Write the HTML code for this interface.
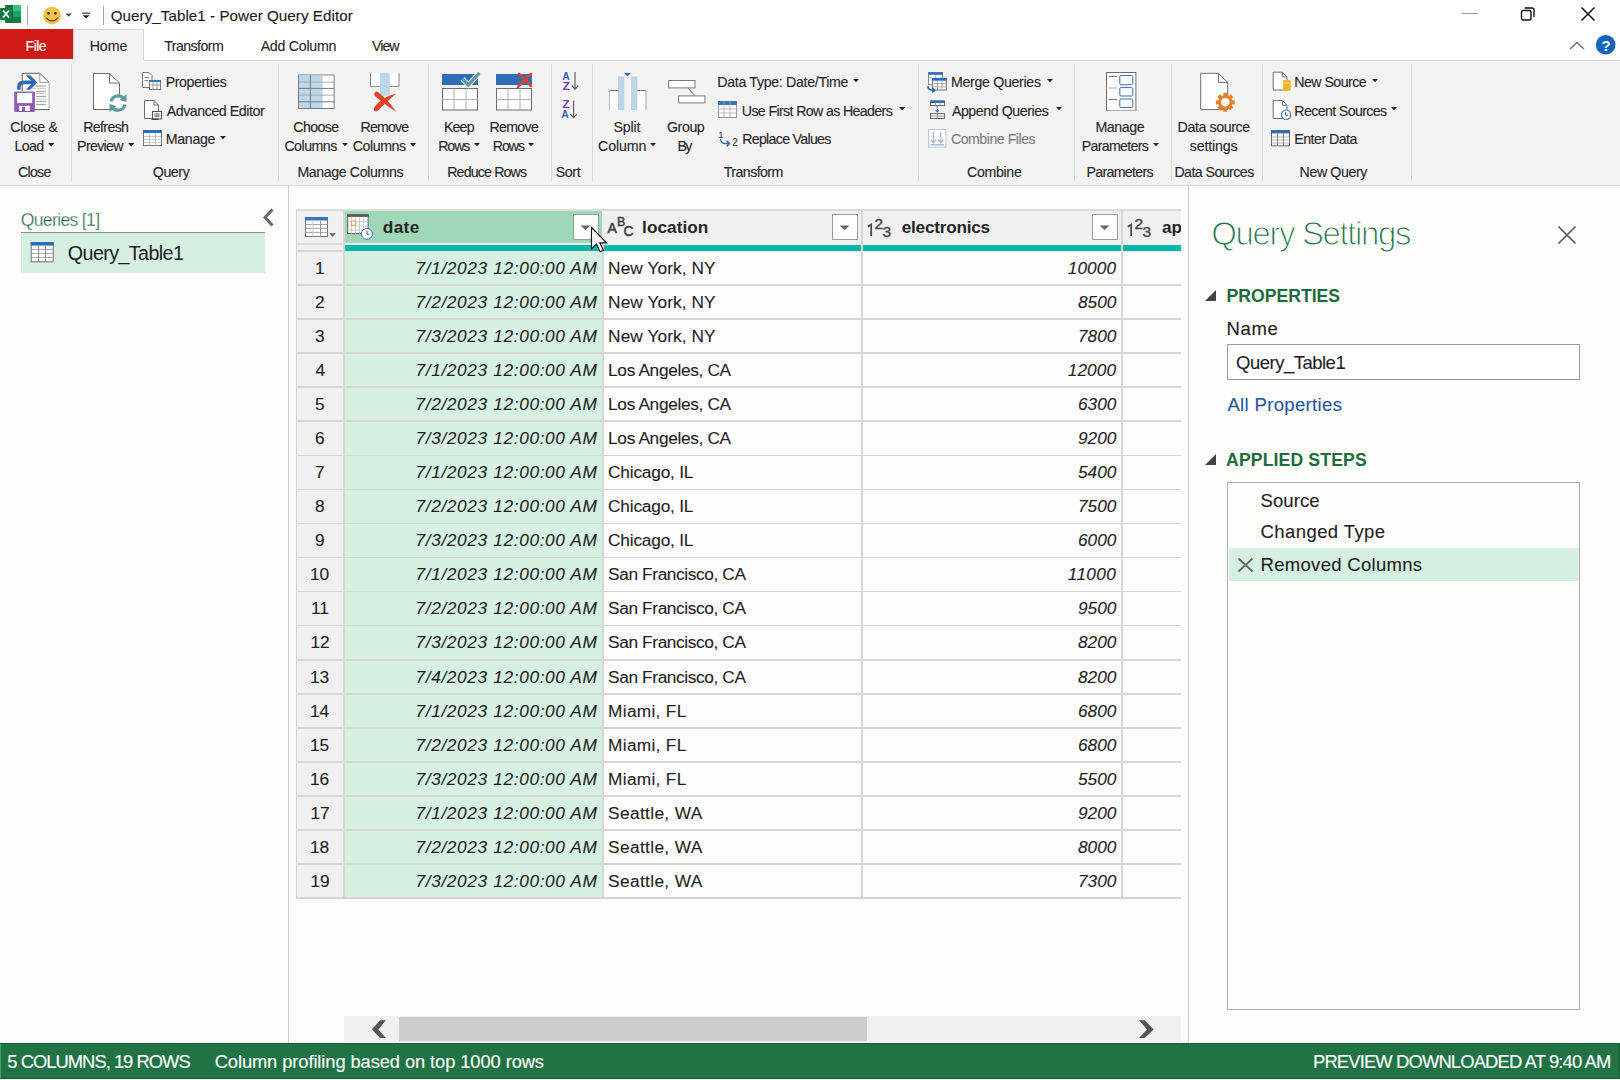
<!DOCTYPE html>
<html><head><meta charset="utf-8"><title>Power Query Editor</title>
<style>
html,body{margin:0;padding:0;width:1620px;height:1080px;overflow:hidden;background:#fff}
.t{position:absolute;font-family:"Liberation Sans",sans-serif;white-space:nowrap;-webkit-text-stroke:0.12px currentColor}
.r{position:absolute;display:block}
</style></head><body>
<div class="r" style="left:0px;top:0px;width:1620px;height:29px;background:#ffffff;"></div>
<svg class="r" style="left:0px;top:4px" width="22" height="20" viewBox="0 0 22 20">
<rect x="5" y="1" width="16" height="18" rx="1" fill="#1e7145"/>
<rect x="13" y="1" width="8" height="6" fill="#33c481"/>
<rect x="13" y="7" width="8" height="6" fill="#21a366"/>
<rect x="13" y="13" width="8" height="6" fill="#107c41"/>
<rect x="5" y="7" width="8" height="6" fill="#185c37"/>
<rect x="0" y="4" width="12" height="12" rx="1" fill="#107c41"/>
<path d="M3 6.5 L9 13.5 M9 6.5 L3 13.5" stroke="#fff" stroke-width="1.8"/>
</svg>
<div class="r" style="left:27px;top:6px;width:1px;height:19px;background:#9aa6b0;"></div>
<svg class="r" style="left:42px;top:6px" width="20" height="20" viewBox="0 0 20 20">
<circle cx="10" cy="9.5" r="9" fill="#f5c542"/>
<circle cx="6.5" cy="7.3" r="1.4" fill="#27306a"/>
<circle cx="13.4" cy="7.3" r="1.4" fill="#27306a"/>
<path d="M4 11.8 Q10 18 16 11.8" stroke="#3b3b5c" stroke-width="1.2" fill="none"/>
</svg>
<svg class="r" style="left:65px;top:13px" width="8" height="5" viewBox="0 0 8 5"><path d="M0.5 0.5 H7 L3.75 3.7 Z" fill="#3d5a6a"/></svg>
<svg class="r" style="left:82px;top:12px" width="10" height="8" viewBox="0 0 10 8"><rect x="0.2" y="0.6" width="7.8" height="1.1" fill="#222"/><path d="M0.6 3.2 H7.6 L4.1 6.6 Z" fill="#222"/></svg>
<div class="r" style="left:103px;top:6px;width:1px;height:19px;background:#9aa6b0;"></div>
<div class="t" style="left:110.70px;top:7.83px;font-size:15.2px;line-height:15.2px;color:#1a1a1a;font-weight:400;font-style:normal;letter-spacing:0.047px;">Query_Table1 - Power Query Editor</div>
<div class="r" style="left:1462px;top:13px;width:16px;height:1px;background:#9a9a9a;"></div>
<svg class="r" style="left:1520px;top:6px" width="16" height="16" viewBox="0 0 16 16"><rect x="1.5" y="4.5" width="9.5" height="9.5" rx="1.5" fill="none" stroke="#111" stroke-width="1.4"/><path d="M4.5 2 H12 Q14 2 14 4 V11" fill="none" stroke="#111" stroke-width="1.4"/></svg>
<svg class="r" style="left:1580px;top:6px" width="16" height="16" viewBox="0 0 16 16"><path d="M1.5 1.5 L14.5 14.5 M14.5 1.5 L1.5 14.5" stroke="#111" stroke-width="1.5"/></svg>
<div class="r" style="left:0px;top:29px;width:1620px;height:31px;background:#ffffff;"></div>
<div class="r" style="left:0px;top:29px;width:73px;height:30px;background:#d11a15;"></div>
<div class="t" style="left:25.50px;top:38.68px;font-size:14.2px;line-height:14.2px;color:#ffffff;font-weight:400;font-style:normal;letter-spacing:-0.533px;">File</div>
<div class="r" style="left:73px;top:29px;width:71px;height:32px;background:#f4f3f4;border:1px solid #d6d6d6;border-bottom:none;box-sizing:border-box"></div>
<div class="t" style="left:89.70px;top:38.68px;font-size:14.2px;line-height:14.2px;color:#262626;font-weight:400;font-style:normal;letter-spacing:-0.067px;">Home</div>
<div class="t" style="left:164.20px;top:38.68px;font-size:14.2px;line-height:14.2px;color:#262626;font-weight:400;font-style:normal;letter-spacing:-0.575px;">Transform</div>
<div class="t" style="left:260.65px;top:38.68px;font-size:14.2px;line-height:14.2px;color:#262626;font-weight:400;font-style:normal;letter-spacing:-0.256px;">Add Column</div>
<div class="t" style="left:371.90px;top:38.68px;font-size:14.2px;line-height:14.2px;color:#262626;font-weight:400;font-style:normal;letter-spacing:-0.933px;">View</div>
<svg class="r" style="left:1569px;top:41px" width="16" height="10" viewBox="0 0 16 10"><path d="M1 8 L8 1.5 L15 8" fill="none" stroke="#6e6e6e" stroke-width="1.3"/></svg>
<svg class="r" style="left:1594px;top:34px" width="24" height="22" viewBox="0 0 24 22"><circle cx="11.7" cy="10.8" r="9.8" fill="#1565c0"/><text x="12" y="16.6" text-anchor="middle" font-family="Liberation Sans" font-size="15" font-weight="700" fill="#fff">?</text></svg>
<div class="r" style="left:0px;top:60px;width:1620px;height:125px;background:#f4f3f4;"></div>
<div class="r" style="left:144px;top:60px;width:1476px;height:1px;background:#d6d6d6;"></div>
<div class="r" style="left:0px;top:185px;width:1620px;height:1px;background:#dadada;"></div>
<div class="r" style="left:70.5px;top:64px;width:1px;height:117px;background:#dadada;"></div>
<div class="r" style="left:277.5px;top:64px;width:1px;height:117px;background:#dadada;"></div>
<div class="r" style="left:428px;top:64px;width:1px;height:117px;background:#dadada;"></div>
<div class="r" style="left:550.5px;top:64px;width:1px;height:117px;background:#dadada;"></div>
<div class="r" style="left:591.5px;top:64px;width:1px;height:117px;background:#dadada;"></div>
<div class="r" style="left:917.5px;top:64px;width:1px;height:117px;background:#dadada;"></div>
<div class="r" style="left:1074px;top:64px;width:1px;height:117px;background:#dadada;"></div>
<div class="r" style="left:1170.5px;top:64px;width:1px;height:117px;background:#dadada;"></div>
<div class="r" style="left:1261.5px;top:64px;width:1px;height:117px;background:#dadada;"></div>
<div class="r" style="left:1410.5px;top:64px;width:1px;height:117px;background:#dadada;"></div>
<svg class="r" style="left:8px;top:68px" width="50" height="48" viewBox="0 0 50 48">
<path d="M14.2 5.3 H31.8 L41.1 14.4 V41.6 H14.2 Z" fill="#fff"/>
<path d="M14.2 23 V5.3 H31.8 L41.1 14.4" fill="none" stroke="#5a5a5a" stroke-width="1"/>
<path d="M31.8 5.3 V14.4 H41.1" fill="none" stroke="#9a9a9a" stroke-width="1"/>
<path d="M41.1 14.4 V41.6" fill="none" stroke="#b5b5b5" stroke-width="1.2"/>
<path d="M26 41.6 H41.1" fill="none" stroke="#5a5a5a" stroke-width="1"/>
<g stroke-width="0.9"><path d="M28.2 18 H38 M28.2 23.3 H38 M28.2 28.4 H38 M28.2 33.3 H38 M28.2 36.4 H38" stroke="#8a8a8a"/><path d="M24 20.4 H38 M28.2 25.6 H38 M28.2 30.9 H38" stroke="#c4c4c4"/></g>
<path d="M9.1 21.8 V19 Q9.1 12.6 16 12.6 H25 V16.2 H16 Q12.7 16.2 12.7 19.5 V21.8 Z" fill="#2f6db5"/>
<path d="M17.8 7.3 H22.3 L29.3 14.4 L22.3 21.8 H17.8 L24.8 14.4 Z" fill="#2f6db5"/>
<rect x="6.2" y="23.6" width="20.7" height="20.4" rx="1" fill="#8f5bb5"/>
<rect x="9.1" y="24.9" width="15.1" height="10.2" fill="#fff"/>
<rect x="11.1" y="37.8" width="10.9" height="5.2" fill="#fff"/>
<rect x="14" y="38.8" width="3" height="4.2" fill="#8f5bb5"/>
</svg>
<div class="t" style="left:10.20px;top:119.78px;font-size:14.2px;line-height:14.2px;color:#262626;font-weight:400;font-style:normal;letter-spacing:-0.300px;">Close &amp;</div>
<div class="t" style="left:14.60px;top:138.98px;font-size:14.2px;line-height:14.2px;color:#262626;font-weight:400;font-style:normal;letter-spacing:-0.667px;">Load</div>
<svg class="r" style="left:47px;top:141.8px" width="8.399999999999999" height="5.52" viewBox="0 0 8.399999999999999 5.52"><path d="M1 1 H7.399999999999999 L4.199999999999999 4.52 Z" fill="#222"/></svg>
<div class="t" style="left:18.00px;top:164.78px;font-size:14.2px;line-height:14.2px;color:#262626;font-weight:400;font-style:normal;letter-spacing:-0.750px;">Close</div>
<svg class="r" style="left:90px;top:70px" width="40" height="44" viewBox="0 0 40 44">
<path d="M3.5 3.5 H19.5 L29.5 13 V39.5 H3.5 Z" fill="#fff" stroke="#6d6d6d" stroke-width="1"/>
<path d="M19.5 3.5 V13 H29.5" fill="none" stroke="#6d6d6d" stroke-width="1"/>
<circle cx="28" cy="33" r="8.5" fill="#fff"/>
<path d="M21 31.5 A7.2 7.2 0 0 1 34 29" fill="none" stroke="#5e9b9a" stroke-width="3.2"/>
<path d="M36.5 24 V32 L29.5 30 Z" fill="#5e9b9a"/>
<path d="M35 34.5 A7.2 7.2 0 0 1 22 37" fill="none" stroke="#5e9b9a" stroke-width="3.2"/>
<path d="M19.5 42 V34 L26.5 36 Z" fill="#5e9b9a"/>
</svg>
<div class="t" style="left:83.20px;top:119.78px;font-size:14.2px;line-height:14.2px;color:#262626;font-weight:400;font-style:normal;letter-spacing:-0.650px;">Refresh</div>
<div class="t" style="left:77.10px;top:138.98px;font-size:14.2px;line-height:14.2px;color:#262626;font-weight:400;font-style:normal;letter-spacing:-0.667px;">Preview</div>
<svg class="r" style="left:126.9px;top:141.8px" width="8.400000000000006" height="5.520000000000003" viewBox="0 0 8.400000000000006 5.520000000000003"><path d="M1 1 H7.400000000000006 L4.200000000000003 4.520000000000003 Z" fill="#222"/></svg>
<svg class="r" style="left:141px;top:71px" width="22" height="20" viewBox="0 0 22 20">
<path d="M1.5 1.5 H8 L11 4.5 V16.5 H1.5 Z" fill="#fff" stroke="#777" stroke-width="1"/>
<path d="M3.5 6.5 H8 M3.5 9.5 H7" stroke="#888" stroke-width="1"/>
<rect x="8.5" y="9.5" width="11" height="9" fill="#fff" stroke="#777" stroke-width="1"/>
<rect x="8.5" y="9" width="11" height="2" fill="#3a75bf"/>
<path d="M8.5 14 H19.5 M12 11 V18.5 M16 11 V18.5" stroke="#888" stroke-width="0.8"/>
</svg>
<div class="t" style="left:165.70px;top:75.08px;font-size:14.2px;line-height:14.2px;color:#262626;font-weight:400;font-style:normal;letter-spacing:-0.400px;">Properties</div>
<svg class="r" style="left:140px;top:98px" width="24" height="24" viewBox="0 0 24 24">
<path d="M4.5 2.5 H14 L18.5 7 V20.5 H4.5 Z" fill="#fff" stroke="#6a6a6a" stroke-width="1"/>
<path d="M14 2.5 V7 H18.5" fill="none" stroke="#6a6a6a" stroke-width="1"/>
<rect x="12.5" y="13.5" width="9" height="7.5" fill="#fff" stroke="#555" stroke-width="1"/>
<rect x="14.5" y="15.3" width="5" height="4" fill="#9a9a9a"/>
<rect x="11.5" y="20.5" width="7" height="1.5" fill="#444"/>
</svg>
<div class="t" style="left:166.70px;top:103.58px;font-size:14.2px;line-height:14.2px;color:#262626;font-weight:400;font-style:normal;letter-spacing:-0.436px;">Advanced Editor</div>
<svg class="r" style="left:142px;top:129px" width="22" height="18" viewBox="0 0 22 18">
<rect x="1.5" y="1.5" width="18" height="15" fill="#fff" stroke="#777" stroke-width="1"/>
<rect x="1" y="1" width="19" height="3" fill="#2f6db5"/>
<path d="M1.5 7.5 H19.5 M1.5 10.5 H19.5 M1.5 13.5 H19.5 M7.5 4 V16.5 M13.5 4 V16.5" stroke="#b0b0b0" stroke-width="0.7"/>
</svg>
<div class="t" style="left:165.80px;top:132.08px;font-size:14.2px;line-height:14.2px;color:#262626;font-weight:400;font-style:normal;letter-spacing:-0.320px;">Manage</div>
<svg class="r" style="left:219.4px;top:134.8px" width="8.0" height="5.300000000000001" viewBox="0 0 8.0 5.300000000000001"><path d="M1 1 H7.0 L4.0 4.300000000000001 Z" fill="#222"/></svg>
<div class="t" style="left:152.80px;top:164.78px;font-size:14.2px;line-height:14.2px;color:#262626;font-weight:400;font-style:normal;letter-spacing:-0.425px;">Query</div>
<svg class="r" style="left:292px;top:68px" width="50" height="46" viewBox="0 0 50 46">
<rect x="6.5" y="7" width="35.6" height="33.5" fill="#fff" stroke="#7a7a7a" stroke-width="1"/>
<rect x="7" y="7.5" width="23.6" height="32.5" fill="#bdd7ea"/>
<path d="M7 14.1 H42 M7 27.1 H42" stroke="#aaa" stroke-width="1"/>
<path d="M6.5 20.4 H42.1 M6.5 33.8 H42.1 M18.4 7 V40.5" stroke="#7a7a7a" stroke-width="1"/>
</svg>
<div class="t" style="left:293.30px;top:119.78px;font-size:14.2px;line-height:14.2px;color:#262626;font-weight:400;font-style:normal;letter-spacing:-0.620px;">Choose</div>
<div class="t" style="left:284.40px;top:138.98px;font-size:14.2px;line-height:14.2px;color:#262626;font-weight:400;font-style:normal;letter-spacing:-0.517px;">Columns</div>
<svg class="r" style="left:340.7px;top:141.8px" width="8.0" height="5.300000000000001" viewBox="0 0 8.0 5.300000000000001"><path d="M1 1 H7.0 L4.0 4.300000000000001 Z" fill="#222"/></svg>
<svg class="r" style="left:366px;top:70px" width="38" height="44" viewBox="0 0 38 44">
<path d="M4.5 2.9 V16.4 H33 V2.9" fill="#fff" stroke="#8a8a8a" stroke-width="1"/>
<path d="M14 2.9 H23.8 V24 Q23.8 25.8 22 25.8 H15.8 Q14 25.8 14 24 Z" fill="#bdd7ea"/>
<path d="M8.5 23 Q10 20.5 12.5 22.5 Q22.8 30.3 30 41.8 Q19.5 35.2 9.5 26.5 Q7.5 25 8.5 23 Z" fill="#e0452a"/>
<path d="M8 40.5 Q7.5 37.5 10 35 Q18.3 26.3 30.2 23.6 Q21.8 30.8 12.5 40 Q10 42.5 8 40.5 Z" fill="#e0452a"/>
</svg>
<div class="t" style="left:360.50px;top:119.78px;font-size:14.2px;line-height:14.2px;color:#262626;font-weight:400;font-style:normal;letter-spacing:-0.820px;">Remove</div>
<div class="t" style="left:352.80px;top:138.98px;font-size:14.2px;line-height:14.2px;color:#262626;font-weight:400;font-style:normal;letter-spacing:-0.450px;">Columns</div>
<svg class="r" style="left:409.2px;top:141.8px" width="8.199999999999989" height="5.409999999999994" viewBox="0 0 8.199999999999989 5.409999999999994"><path d="M1 1 H7.199999999999989 L4.099999999999994 4.409999999999994 Z" fill="#222"/></svg>
<div class="t" style="left:297.40px;top:164.78px;font-size:14.2px;line-height:14.2px;color:#262626;font-weight:400;font-style:normal;letter-spacing:-0.392px;">Manage Columns</div>
<svg class="r" style="left:441px;top:71px" width="42" height="42" viewBox="0 0 42 42">
<rect x="1" y="3" width="36" height="11" fill="#2f6db5"/>
<rect x="1.5" y="17.5" width="35" height="21.5" fill="#fff" stroke="#6a6a6a" stroke-width="1"/>
<path d="M1.5 28.5 H36.5 M13 17.5 V39 M25 17.5 V39" stroke="#b0b0b0" stroke-width="1"/>
<path d="M21.5 8 L27.3 14 L38.5 1.8" stroke="#fff" stroke-width="5.2" fill="none"/><path d="M21.5 8 L27.3 14 L38.5 1.8" stroke="#5e9b9a" stroke-width="3.4" fill="none"/></svg>
<div class="t" style="left:443.90px;top:119.78px;font-size:14.2px;line-height:14.2px;color:#262626;font-weight:400;font-style:normal;letter-spacing:-0.833px;">Keep</div>
<div class="t" style="left:438.20px;top:138.98px;font-size:14.2px;line-height:14.2px;color:#262626;font-weight:400;font-style:normal;letter-spacing:-1.067px;">Rows</div>
<svg class="r" style="left:472.8px;top:141.8px" width="8.0" height="5.300000000000001" viewBox="0 0 8.0 5.300000000000001"><path d="M1 1 H7.0 L4.0 4.300000000000001 Z" fill="#222"/></svg>
<svg class="r" style="left:495px;top:71px" width="42" height="42" viewBox="0 0 42 42">
<rect x="1" y="3" width="36" height="11" fill="#2f6db5"/>
<rect x="1.5" y="17.5" width="35" height="21.5" fill="#fff" stroke="#6a6a6a" stroke-width="1"/>
<path d="M1.5 28.5 H36.5 M13 17.5 V39 M25 17.5 V39" stroke="#b0b0b0" stroke-width="1"/>
<path d="M24 3 Q30 8 36 15 M36 3 Q30 8 23 16" stroke="#e0452a" stroke-width="2.6" fill="none" stroke-linecap="round"/></svg>
<div class="t" style="left:489.50px;top:119.78px;font-size:14.2px;line-height:14.2px;color:#262626;font-weight:400;font-style:normal;letter-spacing:-0.700px;">Remove</div>
<div class="t" style="left:492.70px;top:138.98px;font-size:14.2px;line-height:14.2px;color:#262626;font-weight:400;font-style:normal;letter-spacing:-1.033px;">Rows</div>
<svg class="r" style="left:527.4px;top:141.8px" width="8.0" height="5.300000000000001" viewBox="0 0 8.0 5.300000000000001"><path d="M1 1 H7.0 L4.0 4.300000000000001 Z" fill="#222"/></svg>
<div class="t" style="left:447.20px;top:164.78px;font-size:14.2px;line-height:14.2px;color:#262626;font-weight:400;font-style:normal;letter-spacing:-0.840px;">Reduce Rows</div>
<svg class="r" style="left:556px;top:66px" width="30" height="56" viewBox="0 0 30 56">
<text x="6.3" y="14.1" font-family="Liberation Sans" font-size="11" font-weight="700" fill="#2d64b3" textLength="7.5" lengthAdjust="spacingAndGlyphs">A</text>
<text x="6.5" y="23.5" font-family="Liberation Sans" font-size="11" font-weight="700" fill="#7a3db0" textLength="7.3" lengthAdjust="spacingAndGlyphs">Z</text>
<path d="M19 6 V23 M15.8 19.6 L19 23.2 L22.2 19.6" stroke="#555" stroke-width="1.1" fill="none"/>
<text x="6.2" y="42.3" font-family="Liberation Sans" font-size="11" font-weight="700" fill="#7a3db0" textLength="7.3" lengthAdjust="spacingAndGlyphs">Z</text>
<text x="5.3" y="52.2" font-family="Liberation Sans" font-size="11" font-weight="700" fill="#2d64b3" textLength="7.5" lengthAdjust="spacingAndGlyphs">A</text>
<path d="M17.6 34.5 V51.5 M14.4 48.1 L17.6 51.7 L20.8 48.1" stroke="#555" stroke-width="1.1" fill="none"/>
</svg>
<div class="t" style="left:555.70px;top:164.78px;font-size:14.2px;line-height:14.2px;color:#262626;font-weight:400;font-style:normal;letter-spacing:-0.333px;">Sort</div>
<svg class="r" style="left:606px;top:70px" width="44" height="44" viewBox="0 0 44 44">
<path d="M3.5 40 V20.5 H12.5 M31 20.5 H39.8 V40" fill="none" stroke="#7a7a7a" stroke-width="1"/>
<rect x="3.5" y="21" width="9" height="19" fill="#fff"/>
<rect x="31" y="21" width="8.5" height="19" fill="#fff"/>
<rect x="12.3" y="6.9" width="5.7" height="32.8" fill="#bdd7ea" stroke="#a8c4dc" stroke-width="0.5"/>
<rect x="25.5" y="6.9" width="5.5" height="32.8" fill="#bdd7ea" stroke="#a8c4dc" stroke-width="0.5"/>
<path d="M18 3 H25 L21.5 6.3 Z" fill="#2f6db5"/>
</svg>
<div class="t" style="left:613.40px;top:119.78px;font-size:14.2px;line-height:14.2px;color:#262626;font-weight:400;font-style:normal;letter-spacing:-0.150px;">Split</div>
<div class="t" style="left:598.00px;top:138.98px;font-size:14.2px;line-height:14.2px;color:#262626;font-weight:400;font-style:normal;letter-spacing:-0.080px;">Column</div>
<svg class="r" style="left:648.8px;top:141.8px" width="8.100000000000023" height="5.355000000000013" viewBox="0 0 8.100000000000023 5.355000000000013"><path d="M1 1 H7.100000000000023 L4.050000000000011 4.355000000000013 Z" fill="#222"/></svg>
<svg class="r" style="left:666px;top:78px" width="42" height="28" viewBox="0 0 42 28">
<rect x="2.7" y="2.5" width="26.3" height="7.4" fill="#fff" stroke="#7a7a7a" stroke-width="1"/>
<rect x="12.6" y="17.9" width="26.3" height="7" fill="#fff" stroke="#7a7a7a" stroke-width="1"/>
<path d="M21.7 9.7 L28.8 17.5" stroke="#6a6a6a" stroke-width="1"/>
</svg>
<div class="t" style="left:667.00px;top:119.78px;font-size:14.2px;line-height:14.2px;color:#262626;font-weight:400;font-style:normal;letter-spacing:-0.425px;">Group</div>
<div class="t" style="left:677.60px;top:138.98px;font-size:14.2px;line-height:14.2px;color:#262626;font-weight:400;font-style:normal;letter-spacing:-1.800px;">By</div>
<div class="t" style="left:717.30px;top:75.08px;font-size:14.2px;line-height:14.2px;color:#262626;font-weight:400;font-style:normal;letter-spacing:-0.316px;">Data Type: Date/Time</div>
<svg class="r" style="left:852.2px;top:77.6px" width="8.0" height="5.300000000000001" viewBox="0 0 8.0 5.300000000000001"><path d="M1 1 H7.0 L4.0 4.300000000000001 Z" fill="#222"/></svg>
<svg class="r" style="left:717px;top:100px" width="22" height="20" viewBox="0 0 22 20">
<rect x="1.5" y="1.5" width="18" height="16" fill="#fff" stroke="#999" stroke-width="1"/>
<rect x="1" y="1" width="19" height="4" fill="#3a75bf"/>
<path d="M1.5 9 H19.5 M1.5 13 H19.5 M7 1 V17.5 M13 1 V17.5" stroke="#aaa" stroke-width="0.8"/>
</svg>
<div class="t" style="left:741.80px;top:103.58px;font-size:14.2px;line-height:14.2px;color:#262626;font-weight:400;font-style:normal;letter-spacing:-0.635px;">Use First Row as Headers</div>
<svg class="r" style="left:898px;top:106px" width="8.299999999999955" height="5.464999999999975" viewBox="0 0 8.299999999999955 5.464999999999975"><path d="M1 1 H7.2999999999999545 L4.149999999999977 4.464999999999975 Z" fill="#222"/></svg>
<svg class="r" style="left:717px;top:129px" width="24" height="20" viewBox="0 0 24 20">
<text x="1.3" y="8.6" font-family="Liberation Sans" font-size="9.5" fill="#333">1</text>
<path d="M3.6 10.2 Q3.8 14.6 8.6 14.6 H12.2 M9.6 11.8 L12.6 14.6 L9.6 17.4" stroke="#2f6db5" stroke-width="1.5" fill="none"/>
<text x="15.2" y="17.4" font-family="Liberation Sans" font-size="10" fill="#333">2</text>
</svg>
<div class="t" style="left:742.20px;top:132.08px;font-size:14.2px;line-height:14.2px;color:#262626;font-weight:400;font-style:normal;letter-spacing:-0.700px;">Replace Values</div>
<div class="t" style="left:723.80px;top:164.78px;font-size:14.2px;line-height:14.2px;color:#262626;font-weight:400;font-style:normal;letter-spacing:-0.575px;">Transform</div>
<svg class="r" style="left:922px;top:68px" width="28" height="26" viewBox="0 0 28 26">
<rect x="6.6" y="4.7" width="13.9" height="12" fill="#fff" stroke="#777" stroke-width="0.9"/>
<rect x="6.2" y="4.2" width="14.7" height="2.6" fill="#2f6db5"/>
<path d="M6.6 10 H10 M13.3 6.8 V10" stroke="#999" stroke-width="0.7"/>
<rect x="10.4" y="10.4" width="13.9" height="11.6" fill="#fff" stroke="#666" stroke-width="0.9"/>
<rect x="10" y="9.9" width="14.7" height="2.8" fill="#2f6db5"/>
<path d="M10.4 15.6 H24.3 M10.4 18.8 H24.3 M15.5 12.7 V22 M20 12.7 V22" stroke="#8a8a8a" stroke-width="0.7"/>
<path d="M5.8 18.2 Q6.2 22 10.5 22.2 H12.5 M10.3 20 L12.8 22.2 L10.3 24.4" stroke="#2f6db5" stroke-width="1.6" fill="none"/>
</svg>
<div class="t" style="left:950.90px;top:75.08px;font-size:14.2px;line-height:14.2px;color:#262626;font-weight:400;font-style:normal;letter-spacing:-0.308px;">Merge Queries</div>
<svg class="r" style="left:1046.4px;top:77.6px" width="8.0" height="5.300000000000001" viewBox="0 0 8.0 5.300000000000001"><path d="M1 1 H7.0 L4.0 4.300000000000001 Z" fill="#222"/></svg>
<svg class="r" style="left:922px;top:96px" width="28" height="26" viewBox="0 0 28 26">
<rect x="8.5" y="5" width="13.9" height="4.6" fill="#fff" stroke="#555" stroke-width="0.9"/>
<rect x="8" y="4.6" width="14.8" height="2.4" fill="#2f6db5"/>
<path d="M13.5 7 V9.6 M18 7 V9.6" stroke="#777" stroke-width="0.7"/>
<path d="M15.3 10.2 V15.5" stroke="#2f6db5" stroke-width="1.2" stroke-dasharray="1.5 1"/>
<path d="M13 14.2 H17.6 L15.3 16.8 Z" fill="#2f6db5"/>
<rect x="8.5" y="17.6" width="13.9" height="4.9" fill="#fff" stroke="#555" stroke-width="0.9"/>
<path d="M8.5 20 H22.4 M15.3 17.6 V22.5" stroke="#777" stroke-width="0.7"/>
</svg>
<div class="t" style="left:951.90px;top:103.58px;font-size:14.2px;line-height:14.2px;color:#262626;font-weight:400;font-style:normal;letter-spacing:-0.438px;">Append Queries</div>
<svg class="r" style="left:1054.9px;top:106px" width="8.0" height="5.300000000000001" viewBox="0 0 8.0 5.300000000000001"><path d="M1 1 H7.0 L4.0 4.300000000000001 Z" fill="#222"/></svg>
<svg class="r" style="left:922px;top:124px" width="28" height="26" viewBox="0 0 28 26">
<rect x="6.5" y="5.5" width="17.4" height="17.6" fill="#fff" stroke="#b4c6d6" stroke-width="1"/>
<path d="M11.3 8 V18.5 M8.6 15.6 L11.3 18.8 L14 15.6 M18.8 8 V18.5 M16.1 15.6 L18.8 18.8 L21.5 15.6" stroke="#9cb1c6" stroke-width="1.1" fill="none"/>
<path d="M8.5 20.8 H22" stroke="#9cb1c6" stroke-width="1.3"/>
</svg>
<div class="t" style="left:950.90px;top:132.08px;font-size:14.2px;line-height:14.2px;color:#7d7d7d;font-weight:400;font-style:normal;letter-spacing:-0.492px;">Combine Files</div>
<div class="t" style="left:967.00px;top:164.78px;font-size:14.2px;line-height:14.2px;color:#262626;font-weight:400;font-style:normal;letter-spacing:-0.333px;">Combine</div>
<svg class="r" style="left:1100px;top:66px" width="40" height="48" viewBox="0 0 40 48">
<rect x="6.5" y="6.5" width="29.4" height="38" fill="#fff" stroke="#6a6a6a" stroke-width="1"/>
<path d="M6.5 44.5 H35.9" stroke="#aaa" stroke-width="1"/>
<rect x="19.8" y="9.5" width="13" height="9.3" rx="1.2" fill="#fff" stroke="#2f6db5" stroke-width="1"/>
<rect x="19.8" y="21.6" width="13" height="8.4" rx="1.2" fill="#fff" stroke="#2f6db5" stroke-width="1"/>
<rect x="19.8" y="33" width="13" height="8.6" rx="1.2" fill="#fff" stroke="#2f6db5" stroke-width="1"/>
<path d="M8.6 10.5 H17 M8.6 33.5 H17" stroke="#777" stroke-width="1"/>
<path d="M8.6 22 H17" stroke="#b0b0b0" stroke-width="1"/>
</svg>
<div class="t" style="left:1095.40px;top:119.78px;font-size:14.2px;line-height:14.2px;color:#262626;font-weight:400;font-style:normal;letter-spacing:-0.380px;">Manage</div>
<div class="t" style="left:1081.70px;top:138.98px;font-size:14.2px;line-height:14.2px;color:#262626;font-weight:400;font-style:normal;letter-spacing:-0.689px;">Parameters</div>
<svg class="r" style="left:1152.3px;top:141.8px" width="8.0" height="5.300000000000001" viewBox="0 0 8.0 5.300000000000001"><path d="M1 1 H7.0 L4.0 4.300000000000001 Z" fill="#222"/></svg>
<div class="t" style="left:1086.50px;top:164.78px;font-size:14.2px;line-height:14.2px;color:#262626;font-weight:400;font-style:normal;letter-spacing:-0.689px;">Parameters</div>
<svg class="r" style="left:1196px;top:70px" width="42" height="44" viewBox="0 0 42 44">
<path d="M4.7 3.3 H22.4 L31.7 12.4 V39.6 H4.7 Z" fill="#fff" stroke="#6d6d6d" stroke-width="1"/>
<path d="M22.4 3.3 V12.4 H31.7" fill="none" stroke="#6d6d6d" stroke-width="1"/>
<path d="M36.18 30.17 L38.71 30.39 L38.71 34.21 L36.18 34.43 L35.95 35.06 L35.67 35.66 L37.30 37.60 L34.60 40.30 L32.66 38.67 L32.06 38.95 L31.43 39.18 L31.21 41.71 L27.39 41.71 L27.17 39.18 L26.54 38.95 L25.94 38.67 L24.00 40.30 L21.30 37.60 L22.93 35.66 L22.65 35.06 L22.42 34.43 L19.89 34.21 L19.89 30.39 L22.42 30.17 L22.65 29.54 L22.93 28.94 L21.30 27.00 L24.00 24.30 L25.94 25.93 L26.54 25.65 L27.17 25.42 L27.39 22.89 L31.21 22.89 L31.43 25.42 L32.06 25.65 L32.66 25.93 L34.60 24.30 L37.30 27.00 L35.67 28.94 L35.95 29.54 Z" fill="#ec8228"/>
<circle cx="29.3" cy="32.3" r="4.2" fill="#fff"/>
</svg>
<div class="t" style="left:1177.60px;top:119.78px;font-size:14.2px;line-height:14.2px;color:#262626;font-weight:400;font-style:normal;letter-spacing:-0.390px;">Data source</div>
<div class="t" style="left:1189.70px;top:138.98px;font-size:14.2px;line-height:14.2px;color:#262626;font-weight:400;font-style:normal;letter-spacing:-0.143px;">settings</div>
<div class="t" style="left:1174.40px;top:164.78px;font-size:14.2px;line-height:14.2px;color:#262626;font-weight:400;font-style:normal;letter-spacing:-0.555px;">Data Sources</div>
<svg class="r" style="left:1266px;top:68px" width="30" height="26" viewBox="0 0 30 26">
<path d="M7.2 4.2 H16.5 L20.9 8.9 V22 H7.2 Z" fill="#fff" stroke="#6a6a6a" stroke-width="1"/>
<path d="M16.5 4.2 V8.9 H20.9" fill="none" stroke="#6a6a6a" stroke-width="0.9"/>
<rect x="17.1" y="12.1" width="7.6" height="10.7" rx="1" fill="#f0b429"/>
<path d="M17.6 15 H24.2" stroke="#fbe3a4" stroke-width="0.8"/>
</svg>
<div class="t" style="left:1294.30px;top:75.08px;font-size:14.2px;line-height:14.2px;color:#262626;font-weight:400;font-style:normal;letter-spacing:-0.544px;">New Source</div>
<svg class="r" style="left:1371px;top:77.6px" width="8" height="5.300000000000001" viewBox="0 0 8 5.300000000000001"><path d="M1 1 H7 L4.0 4.300000000000001 Z" fill="#222"/></svg>
<svg class="r" style="left:1266px;top:96px" width="30" height="26" viewBox="0 0 30 26">
<path d="M7.2 4.6 H16.5 L20.9 9.3 V22.5 H7.2 Z" fill="#fff" stroke="#6a6a6a" stroke-width="1"/>
<path d="M16.5 4.6 V9.3 H20.9" fill="none" stroke="#6a6a6a" stroke-width="0.9"/>
<circle cx="20.1" cy="18.7" r="4.7" fill="#fff" stroke="#3a75bf" stroke-width="1.1"/>
<path d="M19.6 15.8 V19.3 H22.3" stroke="#555" stroke-width="0.9" fill="none"/>
</svg>
<div class="t" style="left:1294.30px;top:103.58px;font-size:14.2px;line-height:14.2px;color:#262626;font-weight:400;font-style:normal;letter-spacing:-0.623px;">Recent Sources</div>
<svg class="r" style="left:1390.3px;top:106px" width="8.100000000000136" height="5.355000000000075" viewBox="0 0 8.100000000000136 5.355000000000075"><path d="M1 1 H7.100000000000136 L4.050000000000068 4.355000000000075 Z" fill="#222"/></svg>
<svg class="r" style="left:1270px;top:129px" width="22" height="19" viewBox="0 0 22 19">
<rect x="1.5" y="1.5" width="18" height="15.3" fill="#fff" stroke="#666" stroke-width="1"/>
<rect x="1" y="1.2" width="19" height="3.2" fill="#2f6db5"/>
<path d="M1.5 8 H19.5 M1.5 11 H19.5 M1.5 14 H19.5" stroke="#9a9a9a" stroke-width="0.7"/>
<path d="M7.6 4.4 V16.8 M13.4 4.4 V16.8" stroke="#666" stroke-width="0.8"/>
</svg>
<div class="t" style="left:1294.30px;top:132.08px;font-size:14.2px;line-height:14.2px;color:#262626;font-weight:400;font-style:normal;letter-spacing:-0.522px;">Enter Data</div>
<div class="t" style="left:1299.60px;top:164.78px;font-size:14.2px;line-height:14.2px;color:#262626;font-weight:400;font-style:normal;letter-spacing:-0.387px;">New Query</div>
<div class="r" style="left:0px;top:186px;width:1620px;height:857px;background:#fdfdfc;"></div>
<div class="r" style="left:288px;top:186px;width:1px;height:857px;background:#cdcdcd;"></div>
<div class="r" style="left:1188px;top:186px;width:1px;height:857px;background:#cdcdcd;"></div>
<div class="t" style="left:20.80px;top:211.99px;font-size:17.5px;line-height:17.5px;color:#1d6a3c;font-weight:400;font-style:normal;letter-spacing:-0.640px;-webkit-text-stroke:0.3px #fdfdfc">Queries [1]</div>
<svg class="r" style="left:259px;top:206px" width="18" height="22" viewBox="0 0 18 22"><path d="M13.5 3.5 L6 11.5 L13.5 19.5" stroke="#6b6b6b" stroke-width="3" fill="none"/></svg>
<div class="r" style="left:21px;top:231.7px;width:244px;height:1.5px;background:#8c8c8c;"></div>
<div class="r" style="left:21px;top:233.2px;width:244px;height:39.4px;background:#d5efe1;"></div>
<svg class="r" style="left:29px;top:240px" width="27" height="24" viewBox="0 0 27 24">
<rect x="2.2" y="2.5" width="22" height="19.3" fill="#fff" stroke="#6f6f6f" stroke-width="1"/>
<rect x="1.7" y="2" width="23" height="3.6" fill="#2f6db5"/>
<path d="M2.2 9.5 H24.2 M2.2 13.5 H24.2 M2.2 17.5 H24.2" stroke="#999" stroke-width="0.8"/>
<path d="M9.6 5.6 V21.8 M16.6 5.6 V21.8" stroke="#7a7a7a" stroke-width="0.9"/>
</svg>
<div class="t" style="left:67.80px;top:243.82px;font-size:19.7px;line-height:19.7px;color:#1f1f1f;font-weight:400;font-style:normal;letter-spacing:-0.591px;-webkit-text-stroke:0.05px currentColor">Query_Table1</div>
<div class="r" style="left:296px;top:209px;width:885px;height:36px;background:#f0f0f0;"></div>
<div class="r" style="left:344px;top:211px;width:258px;height:31.8px;background:#9fd7b9;"></div>
<div class="r" style="left:296px;top:209px;width:885px;height:2px;background:#dcdcdc;"></div>
<div class="r" style="left:295.5px;top:209px;width:1.5px;height:690.23px;background:#d4d4d4;"></div>
<div class="r" style="left:344px;top:245px;width:837px;height:5.8px;background:#03b8a8;"></div>
<div class="r" style="left:297px;top:243px;width:46px;height:1.5px;background:#dedede;"></div>
<div class="r" style="left:297px;top:244.5px;width:46px;height:5.5px;background:#f0f0f0;"></div>
<div class="r" style="left:297px;top:250.9px;width:46px;height:647.33px;background:#f0f0f0;"></div>
<div class="r" style="left:344px;top:250.9px;width:258px;height:647.33px;background:#d6f0e2;"></div>
<div class="r" style="left:603px;top:250.9px;width:578px;height:647.33px;background:#fdfdfd;"></div>
<div class="r" style="left:342.5px;top:209px;width:2px;height:690.23px;background:#d9d6d6;"></div>
<div class="r" style="left:601.8px;top:209px;width:2px;height:690.23px;background:#d9d6d6;"></div>
<div class="r" style="left:861.4px;top:209px;width:2px;height:690.23px;background:#d9d6d6;"></div>
<div class="r" style="left:1121px;top:209px;width:2px;height:690.23px;background:#d9d6d6;"></div>
<div class="r" style="left:601.8px;top:211px;width:2px;height:31.5px;background:#f2eeee;"></div>
<div class="r" style="left:296px;top:284.17px;width:885px;height:1.6px;background:#d9d6d6;"></div>
<div class="r" style="left:296px;top:318.24px;width:885px;height:1.6px;background:#d9d6d6;"></div>
<div class="r" style="left:296px;top:352.31px;width:885px;height:1.6px;background:#d9d6d6;"></div>
<div class="r" style="left:296px;top:386.38px;width:885px;height:1.6px;background:#d9d6d6;"></div>
<div class="r" style="left:296px;top:420.45px;width:885px;height:1.6px;background:#d9d6d6;"></div>
<div class="r" style="left:296px;top:454.52000000000004px;width:885px;height:1.6px;background:#d9d6d6;"></div>
<div class="r" style="left:296px;top:488.59px;width:885px;height:1.6px;background:#d9d6d6;"></div>
<div class="r" style="left:296px;top:522.6600000000001px;width:885px;height:1.6px;background:#d9d6d6;"></div>
<div class="r" style="left:296px;top:556.73px;width:885px;height:1.6px;background:#d9d6d6;"></div>
<div class="r" style="left:296px;top:590.8000000000001px;width:885px;height:1.6px;background:#d9d6d6;"></div>
<div class="r" style="left:296px;top:624.87px;width:885px;height:1.6px;background:#d9d6d6;"></div>
<div class="r" style="left:296px;top:658.94px;width:885px;height:1.6px;background:#d9d6d6;"></div>
<div class="r" style="left:296px;top:693.0100000000001px;width:885px;height:1.6px;background:#d9d6d6;"></div>
<div class="r" style="left:296px;top:727.08px;width:885px;height:1.6px;background:#d9d6d6;"></div>
<div class="r" style="left:296px;top:761.1500000000001px;width:885px;height:1.6px;background:#d9d6d6;"></div>
<div class="r" style="left:296px;top:795.22px;width:885px;height:1.6px;background:#d9d6d6;"></div>
<div class="r" style="left:296px;top:829.2900000000001px;width:885px;height:1.6px;background:#d9d6d6;"></div>
<div class="r" style="left:296px;top:863.36px;width:885px;height:1.6px;background:#d9d6d6;"></div>
<div class="r" style="left:296px;top:897.4300000000001px;width:885px;height:1.6px;background:#d9d6d6;"></div>
<div class="r" style="left:344px;top:250.70000000000002px;width:837px;height:1.2px;background:#ece6e6;"></div>
<div class="r" style="left:296px;top:250.1px;width:47px;height:1.6px;background:#d9d6d6;"></div>
<div class="r" style="left:296px;top:897.23px;width:885px;height:2.2px;background:#d4d2d2;"></div>
<div class="t" style="left:315.00px;top:259.66px;font-size:17.3px;line-height:17.3px;color:#1f1f1f;font-weight:400;font-style:normal;-webkit-text-stroke:0.1px currentColor">1</div>
<div class="t" style="left:415.50px;top:259.66px;font-size:17.3px;line-height:17.3px;color:#1f1f1f;font-weight:400;font-style:italic;letter-spacing:0.632px;-webkit-text-stroke:0.1px currentColor">7/1/2023 12:00:00 AM</div>
<div class="t" style="left:608.10px;top:259.66px;font-size:17.3px;line-height:17.3px;color:#1f1f1f;font-weight:400;font-style:normal;letter-spacing:0.073px;-webkit-text-stroke:0.1px currentColor">New York, NY</div>
<div class="t" style="left:1067.80px;top:259.66px;font-size:17.3px;line-height:17.3px;color:#1f1f1f;font-weight:400;font-style:italic;letter-spacing:0.050px;-webkit-text-stroke:0.1px currentColor">10000</div>
<div class="t" style="left:315.00px;top:293.73px;font-size:17.3px;line-height:17.3px;color:#1f1f1f;font-weight:400;font-style:normal;-webkit-text-stroke:0.1px currentColor">2</div>
<div class="t" style="left:415.50px;top:293.73px;font-size:17.3px;line-height:17.3px;color:#1f1f1f;font-weight:400;font-style:italic;letter-spacing:0.632px;-webkit-text-stroke:0.1px currentColor">7/2/2023 12:00:00 AM</div>
<div class="t" style="left:608.10px;top:293.73px;font-size:17.3px;line-height:17.3px;color:#1f1f1f;font-weight:400;font-style:normal;letter-spacing:0.073px;-webkit-text-stroke:0.1px currentColor">New York, NY</div>
<div class="t" style="left:1078.00px;top:293.73px;font-size:17.3px;line-height:17.3px;color:#1f1f1f;font-weight:400;font-style:italic;-webkit-text-stroke:0.1px currentColor">8500</div>
<div class="t" style="left:315.00px;top:327.80px;font-size:17.3px;line-height:17.3px;color:#1f1f1f;font-weight:400;font-style:normal;-webkit-text-stroke:0.1px currentColor">3</div>
<div class="t" style="left:415.50px;top:327.80px;font-size:17.3px;line-height:17.3px;color:#1f1f1f;font-weight:400;font-style:italic;letter-spacing:0.632px;-webkit-text-stroke:0.1px currentColor">7/3/2023 12:00:00 AM</div>
<div class="t" style="left:608.10px;top:327.80px;font-size:17.3px;line-height:17.3px;color:#1f1f1f;font-weight:400;font-style:normal;letter-spacing:0.073px;-webkit-text-stroke:0.1px currentColor">New York, NY</div>
<div class="t" style="left:1078.00px;top:327.80px;font-size:17.3px;line-height:17.3px;color:#1f1f1f;font-weight:400;font-style:italic;-webkit-text-stroke:0.1px currentColor">7800</div>
<div class="t" style="left:315.50px;top:361.87px;font-size:17.3px;line-height:17.3px;color:#1f1f1f;font-weight:400;font-style:normal;-webkit-text-stroke:0.1px currentColor">4</div>
<div class="t" style="left:415.50px;top:361.87px;font-size:17.3px;line-height:17.3px;color:#1f1f1f;font-weight:400;font-style:italic;letter-spacing:0.632px;-webkit-text-stroke:0.1px currentColor">7/1/2023 12:00:00 AM</div>
<div class="t" style="left:608.10px;top:361.87px;font-size:17.3px;line-height:17.3px;color:#1f1f1f;font-weight:400;font-style:normal;letter-spacing:-0.343px;-webkit-text-stroke:0.1px currentColor">Los Angeles, CA</div>
<div class="t" style="left:1067.80px;top:361.87px;font-size:17.3px;line-height:17.3px;color:#1f1f1f;font-weight:400;font-style:italic;letter-spacing:0.050px;-webkit-text-stroke:0.1px currentColor">12000</div>
<div class="t" style="left:315.00px;top:395.94px;font-size:17.3px;line-height:17.3px;color:#1f1f1f;font-weight:400;font-style:normal;-webkit-text-stroke:0.1px currentColor">5</div>
<div class="t" style="left:415.50px;top:395.94px;font-size:17.3px;line-height:17.3px;color:#1f1f1f;font-weight:400;font-style:italic;letter-spacing:0.632px;-webkit-text-stroke:0.1px currentColor">7/2/2023 12:00:00 AM</div>
<div class="t" style="left:608.10px;top:395.94px;font-size:17.3px;line-height:17.3px;color:#1f1f1f;font-weight:400;font-style:normal;letter-spacing:-0.343px;-webkit-text-stroke:0.1px currentColor">Los Angeles, CA</div>
<div class="t" style="left:1078.00px;top:395.94px;font-size:17.3px;line-height:17.3px;color:#1f1f1f;font-weight:400;font-style:italic;-webkit-text-stroke:0.1px currentColor">6300</div>
<div class="t" style="left:315.00px;top:430.01px;font-size:17.3px;line-height:17.3px;color:#1f1f1f;font-weight:400;font-style:normal;-webkit-text-stroke:0.1px currentColor">6</div>
<div class="t" style="left:415.50px;top:430.01px;font-size:17.3px;line-height:17.3px;color:#1f1f1f;font-weight:400;font-style:italic;letter-spacing:0.632px;-webkit-text-stroke:0.1px currentColor">7/3/2023 12:00:00 AM</div>
<div class="t" style="left:608.10px;top:430.01px;font-size:17.3px;line-height:17.3px;color:#1f1f1f;font-weight:400;font-style:normal;letter-spacing:-0.343px;-webkit-text-stroke:0.1px currentColor">Los Angeles, CA</div>
<div class="t" style="left:1078.00px;top:430.01px;font-size:17.3px;line-height:17.3px;color:#1f1f1f;font-weight:400;font-style:italic;-webkit-text-stroke:0.1px currentColor">9200</div>
<div class="t" style="left:315.00px;top:464.08px;font-size:17.3px;line-height:17.3px;color:#1f1f1f;font-weight:400;font-style:normal;-webkit-text-stroke:0.1px currentColor">7</div>
<div class="t" style="left:415.50px;top:464.08px;font-size:17.3px;line-height:17.3px;color:#1f1f1f;font-weight:400;font-style:italic;letter-spacing:0.632px;-webkit-text-stroke:0.1px currentColor">7/1/2023 12:00:00 AM</div>
<div class="t" style="left:608.10px;top:464.08px;font-size:17.3px;line-height:17.3px;color:#1f1f1f;font-weight:400;font-style:normal;letter-spacing:-0.210px;-webkit-text-stroke:0.1px currentColor">Chicago, IL</div>
<div class="t" style="left:1078.00px;top:464.08px;font-size:17.3px;line-height:17.3px;color:#1f1f1f;font-weight:400;font-style:italic;-webkit-text-stroke:0.1px currentColor">5400</div>
<div class="t" style="left:315.00px;top:498.15px;font-size:17.3px;line-height:17.3px;color:#1f1f1f;font-weight:400;font-style:normal;-webkit-text-stroke:0.1px currentColor">8</div>
<div class="t" style="left:415.50px;top:498.15px;font-size:17.3px;line-height:17.3px;color:#1f1f1f;font-weight:400;font-style:italic;letter-spacing:0.632px;-webkit-text-stroke:0.1px currentColor">7/2/2023 12:00:00 AM</div>
<div class="t" style="left:608.10px;top:498.15px;font-size:17.3px;line-height:17.3px;color:#1f1f1f;font-weight:400;font-style:normal;letter-spacing:-0.210px;-webkit-text-stroke:0.1px currentColor">Chicago, IL</div>
<div class="t" style="left:1078.00px;top:498.15px;font-size:17.3px;line-height:17.3px;color:#1f1f1f;font-weight:400;font-style:italic;-webkit-text-stroke:0.1px currentColor">7500</div>
<div class="t" style="left:315.00px;top:532.22px;font-size:17.3px;line-height:17.3px;color:#1f1f1f;font-weight:400;font-style:normal;-webkit-text-stroke:0.1px currentColor">9</div>
<div class="t" style="left:415.50px;top:532.22px;font-size:17.3px;line-height:17.3px;color:#1f1f1f;font-weight:400;font-style:italic;letter-spacing:0.632px;-webkit-text-stroke:0.1px currentColor">7/3/2023 12:00:00 AM</div>
<div class="t" style="left:608.10px;top:532.22px;font-size:17.3px;line-height:17.3px;color:#1f1f1f;font-weight:400;font-style:normal;letter-spacing:-0.210px;-webkit-text-stroke:0.1px currentColor">Chicago, IL</div>
<div class="t" style="left:1078.00px;top:532.22px;font-size:17.3px;line-height:17.3px;color:#1f1f1f;font-weight:400;font-style:italic;-webkit-text-stroke:0.1px currentColor">6000</div>
<div class="t" style="left:310.00px;top:566.29px;font-size:17.3px;line-height:17.3px;color:#1f1f1f;font-weight:400;font-style:normal;-webkit-text-stroke:0.1px currentColor">10</div>
<div class="t" style="left:415.50px;top:566.29px;font-size:17.3px;line-height:17.3px;color:#1f1f1f;font-weight:400;font-style:italic;letter-spacing:0.632px;-webkit-text-stroke:0.1px currentColor">7/1/2023 12:00:00 AM</div>
<div class="t" style="left:608.10px;top:566.29px;font-size:17.3px;line-height:17.3px;color:#1f1f1f;font-weight:400;font-style:normal;letter-spacing:-0.387px;-webkit-text-stroke:0.1px currentColor">San Francisco, CA</div>
<div class="t" style="left:1067.80px;top:566.29px;font-size:17.3px;line-height:17.3px;color:#1f1f1f;font-weight:400;font-style:italic;letter-spacing:0.300px;-webkit-text-stroke:0.1px currentColor">11000</div>
<div class="t" style="left:311.00px;top:600.36px;font-size:17.3px;line-height:17.3px;color:#1f1f1f;font-weight:400;font-style:normal;-webkit-text-stroke:0.1px currentColor">11</div>
<div class="t" style="left:415.50px;top:600.36px;font-size:17.3px;line-height:17.3px;color:#1f1f1f;font-weight:400;font-style:italic;letter-spacing:0.632px;-webkit-text-stroke:0.1px currentColor">7/2/2023 12:00:00 AM</div>
<div class="t" style="left:608.10px;top:600.36px;font-size:17.3px;line-height:17.3px;color:#1f1f1f;font-weight:400;font-style:normal;letter-spacing:-0.387px;-webkit-text-stroke:0.1px currentColor">San Francisco, CA</div>
<div class="t" style="left:1078.00px;top:600.36px;font-size:17.3px;line-height:17.3px;color:#1f1f1f;font-weight:400;font-style:italic;-webkit-text-stroke:0.1px currentColor">9500</div>
<div class="t" style="left:310.50px;top:634.43px;font-size:17.3px;line-height:17.3px;color:#1f1f1f;font-weight:400;font-style:normal;-webkit-text-stroke:0.1px currentColor">12</div>
<div class="t" style="left:415.50px;top:634.43px;font-size:17.3px;line-height:17.3px;color:#1f1f1f;font-weight:400;font-style:italic;letter-spacing:0.632px;-webkit-text-stroke:0.1px currentColor">7/3/2023 12:00:00 AM</div>
<div class="t" style="left:608.10px;top:634.43px;font-size:17.3px;line-height:17.3px;color:#1f1f1f;font-weight:400;font-style:normal;letter-spacing:-0.387px;-webkit-text-stroke:0.1px currentColor">San Francisco, CA</div>
<div class="t" style="left:1078.00px;top:634.43px;font-size:17.3px;line-height:17.3px;color:#1f1f1f;font-weight:400;font-style:italic;-webkit-text-stroke:0.1px currentColor">8200</div>
<div class="t" style="left:310.00px;top:668.50px;font-size:17.3px;line-height:17.3px;color:#1f1f1f;font-weight:400;font-style:normal;-webkit-text-stroke:0.1px currentColor">13</div>
<div class="t" style="left:415.50px;top:668.50px;font-size:17.3px;line-height:17.3px;color:#1f1f1f;font-weight:400;font-style:italic;letter-spacing:0.632px;-webkit-text-stroke:0.1px currentColor">7/4/2023 12:00:00 AM</div>
<div class="t" style="left:608.10px;top:668.50px;font-size:17.3px;line-height:17.3px;color:#1f1f1f;font-weight:400;font-style:normal;letter-spacing:-0.387px;-webkit-text-stroke:0.1px currentColor">San Francisco, CA</div>
<div class="t" style="left:1078.00px;top:668.50px;font-size:17.3px;line-height:17.3px;color:#1f1f1f;font-weight:400;font-style:italic;-webkit-text-stroke:0.1px currentColor">8200</div>
<div class="t" style="left:310.00px;top:702.57px;font-size:17.3px;line-height:17.3px;color:#1f1f1f;font-weight:400;font-style:normal;-webkit-text-stroke:0.1px currentColor">14</div>
<div class="t" style="left:415.50px;top:702.57px;font-size:17.3px;line-height:17.3px;color:#1f1f1f;font-weight:400;font-style:italic;letter-spacing:0.632px;-webkit-text-stroke:0.1px currentColor">7/1/2023 12:00:00 AM</div>
<div class="t" style="left:608.10px;top:702.57px;font-size:17.3px;line-height:17.3px;color:#1f1f1f;font-weight:400;font-style:normal;letter-spacing:0.287px;-webkit-text-stroke:0.1px currentColor">Miami, FL</div>
<div class="t" style="left:1078.00px;top:702.57px;font-size:17.3px;line-height:17.3px;color:#1f1f1f;font-weight:400;font-style:italic;-webkit-text-stroke:0.1px currentColor">6800</div>
<div class="t" style="left:310.00px;top:736.64px;font-size:17.3px;line-height:17.3px;color:#1f1f1f;font-weight:400;font-style:normal;-webkit-text-stroke:0.1px currentColor">15</div>
<div class="t" style="left:415.50px;top:736.64px;font-size:17.3px;line-height:17.3px;color:#1f1f1f;font-weight:400;font-style:italic;letter-spacing:0.632px;-webkit-text-stroke:0.1px currentColor">7/2/2023 12:00:00 AM</div>
<div class="t" style="left:608.10px;top:736.64px;font-size:17.3px;line-height:17.3px;color:#1f1f1f;font-weight:400;font-style:normal;letter-spacing:0.287px;-webkit-text-stroke:0.1px currentColor">Miami, FL</div>
<div class="t" style="left:1078.00px;top:736.64px;font-size:17.3px;line-height:17.3px;color:#1f1f1f;font-weight:400;font-style:italic;-webkit-text-stroke:0.1px currentColor">6800</div>
<div class="t" style="left:310.00px;top:770.71px;font-size:17.3px;line-height:17.3px;color:#1f1f1f;font-weight:400;font-style:normal;-webkit-text-stroke:0.1px currentColor">16</div>
<div class="t" style="left:415.50px;top:770.71px;font-size:17.3px;line-height:17.3px;color:#1f1f1f;font-weight:400;font-style:italic;letter-spacing:0.632px;-webkit-text-stroke:0.1px currentColor">7/3/2023 12:00:00 AM</div>
<div class="t" style="left:608.10px;top:770.71px;font-size:17.3px;line-height:17.3px;color:#1f1f1f;font-weight:400;font-style:normal;letter-spacing:0.287px;-webkit-text-stroke:0.1px currentColor">Miami, FL</div>
<div class="t" style="left:1078.00px;top:770.71px;font-size:17.3px;line-height:17.3px;color:#1f1f1f;font-weight:400;font-style:italic;-webkit-text-stroke:0.1px currentColor">5500</div>
<div class="t" style="left:310.50px;top:804.78px;font-size:17.3px;line-height:17.3px;color:#1f1f1f;font-weight:400;font-style:normal;-webkit-text-stroke:0.1px currentColor">17</div>
<div class="t" style="left:415.50px;top:804.78px;font-size:17.3px;line-height:17.3px;color:#1f1f1f;font-weight:400;font-style:italic;letter-spacing:0.632px;-webkit-text-stroke:0.1px currentColor">7/1/2023 12:00:00 AM</div>
<div class="t" style="left:608.10px;top:804.78px;font-size:17.3px;line-height:17.3px;color:#1f1f1f;font-weight:400;font-style:normal;letter-spacing:0.350px;-webkit-text-stroke:0.1px currentColor">Seattle, WA</div>
<div class="t" style="left:1078.00px;top:804.78px;font-size:17.3px;line-height:17.3px;color:#1f1f1f;font-weight:400;font-style:italic;-webkit-text-stroke:0.1px currentColor">9200</div>
<div class="t" style="left:310.00px;top:838.85px;font-size:17.3px;line-height:17.3px;color:#1f1f1f;font-weight:400;font-style:normal;-webkit-text-stroke:0.1px currentColor">18</div>
<div class="t" style="left:415.50px;top:838.85px;font-size:17.3px;line-height:17.3px;color:#1f1f1f;font-weight:400;font-style:italic;letter-spacing:0.632px;-webkit-text-stroke:0.1px currentColor">7/2/2023 12:00:00 AM</div>
<div class="t" style="left:608.10px;top:838.85px;font-size:17.3px;line-height:17.3px;color:#1f1f1f;font-weight:400;font-style:normal;letter-spacing:0.350px;-webkit-text-stroke:0.1px currentColor">Seattle, WA</div>
<div class="t" style="left:1078.00px;top:838.85px;font-size:17.3px;line-height:17.3px;color:#1f1f1f;font-weight:400;font-style:italic;-webkit-text-stroke:0.1px currentColor">8000</div>
<div class="t" style="left:310.50px;top:872.92px;font-size:17.3px;line-height:17.3px;color:#1f1f1f;font-weight:400;font-style:normal;-webkit-text-stroke:0.1px currentColor">19</div>
<div class="t" style="left:415.50px;top:872.92px;font-size:17.3px;line-height:17.3px;color:#1f1f1f;font-weight:400;font-style:italic;letter-spacing:0.632px;-webkit-text-stroke:0.1px currentColor">7/3/2023 12:00:00 AM</div>
<div class="t" style="left:608.10px;top:872.92px;font-size:17.3px;line-height:17.3px;color:#1f1f1f;font-weight:400;font-style:normal;letter-spacing:0.350px;-webkit-text-stroke:0.1px currentColor">Seattle, WA</div>
<div class="t" style="left:1078.00px;top:872.92px;font-size:17.3px;line-height:17.3px;color:#1f1f1f;font-weight:400;font-style:italic;-webkit-text-stroke:0.1px currentColor">7300</div>
<svg class="r" style="left:303px;top:214px" width="36" height="26" viewBox="0 0 36 26">
<rect x="2.5" y="3.5" width="22" height="19" fill="#fff" stroke="#777" stroke-width="1"/>
<rect x="2" y="3" width="23" height="3.5" fill="#3a75bf"/>
<path d="M2.5 10.5 H24.5 M2.5 14.4 H24.5 M2.5 18.4 H24.5" stroke="#999" stroke-width="0.9"/><path d="M10 6.5 V22.5" stroke="#c8c8c8" stroke-width="0.9"/><path d="M17.5 6.5 V22.5" stroke="#888" stroke-width="0.9"/>
<path d="M26.3 19.2 H33 L29.65 22.8 Z" fill="#666"/>
</svg>
<svg class="r" style="left:346px;top:213px" width="30" height="28" viewBox="0 0 30 28">
<rect x="1.7" y="1.8" width="20.4" height="18.8" fill="#fff" stroke="#5a5a5a" stroke-width="1"/>
<rect x="1.2" y="1.3" width="21.4" height="2.6" fill="#5a5a5a"/>
<path d="M1.7 8.5 H22.1 M1.7 13 H22.1 M1.7 17 H22.1 M5.5 3.9 V20.6 M9.5 3.9 V20.6 M13.5 3.9 V20.6 M17.5 3.9 V20.6" stroke="#c0c0c0" stroke-width="0.8"/>
<rect x="5.6" y="7.9" width="3.9" height="4.4" fill="#fff" stroke="#ee9b45" stroke-width="1"/>
<circle cx="20.9" cy="20.9" r="5.5" fill="#fff" stroke="#3a75bf" stroke-width="1"/>
<path d="M21 17.6 V21.3 H23.4" stroke="#555" stroke-width="1" fill="none"/>
</svg>
<div class="t" style="left:382.80px;top:219.04px;font-size:17.2px;line-height:17.2px;color:#262626;font-weight:700;font-style:normal;letter-spacing:0.367px;-webkit-text-stroke:0">date</div>
<div class="r" style="left:572.5px;top:214.4px;width:26px;height:25.5px;background:#ffffff;border:1.5px solid #9b9b9b;box-sizing:border-box"></div>
<svg class="r" style="left:579.5px;top:225px" width="12" height="6" viewBox="0 0 12 6"><path d="M0.5 0.5 H10.5 L5.5 5 Z" fill="#666"/></svg>
<svg class="r" style="left:606px;top:212px" width="32" height="28" viewBox="0 0 32 28">
<text x="1.5" y="20.8" font-family="Liberation Sans" font-size="14" fill="#404040" stroke="#404040" stroke-width="0.55">A</text>
<text x="11" y="14" font-family="Liberation Sans" font-size="12.5" fill="#404040" stroke="#404040" stroke-width="0.5">B</text>
<text x="17.5" y="24" font-family="Liberation Sans" font-size="14" fill="#404040" stroke="#404040" stroke-width="0.55">C</text>
</svg>
<div class="t" style="left:642.10px;top:218.74px;font-size:17.2px;line-height:17.2px;color:#262626;font-weight:700;font-style:normal;letter-spacing:0.043px;-webkit-text-stroke:0">location</div>
<div class="r" style="left:832px;top:214.4px;width:26px;height:25.5px;background:#ffffff;border:1.5px solid #9b9b9b;box-sizing:border-box"></div>
<svg class="r" style="left:839px;top:225px" width="12" height="6" viewBox="0 0 12 6"><path d="M0.5 0.5 H10.5 L5.5 5 Z" fill="#666"/></svg>
<svg class="r" style="left:866px;top:212px" width="30" height="30" viewBox="0 0 30 30">
<path d="M1.8 14.8 L5.2 12.6 V24" stroke="#484848" stroke-width="1.7" fill="none"/>
<text x="8.4" y="16.8" font-family="Liberation Sans" font-size="15.5" fill="#484848" stroke="#484848" stroke-width="0.4">2</text>
<text x="16.6" y="24.6" font-family="Liberation Sans" font-size="15.5" fill="#484848" stroke="#484848" stroke-width="0.4">3</text>
</svg>
<svg class="r" style="left:1126px;top:212px" width="30" height="30" viewBox="0 0 30 30">
<path d="M1.8 14.8 L5.2 12.6 V24" stroke="#484848" stroke-width="1.7" fill="none"/>
<text x="8.4" y="16.8" font-family="Liberation Sans" font-size="15.5" fill="#484848" stroke="#484848" stroke-width="0.4">2</text>
<text x="16.6" y="24.6" font-family="Liberation Sans" font-size="15.5" fill="#484848" stroke="#484848" stroke-width="0.4">3</text>
</svg>
<div class="t" style="left:901.70px;top:218.74px;font-size:17.2px;line-height:17.2px;color:#262626;font-weight:700;font-style:normal;letter-spacing:-0.230px;-webkit-text-stroke:0">electronics</div>
<div class="r" style="left:1092.2px;top:214.4px;width:26px;height:25.5px;background:#ffffff;border:1.5px solid #9b9b9b;box-sizing:border-box"></div>
<svg class="r" style="left:1099.2px;top:225px" width="12" height="6" viewBox="0 0 12 6"><path d="M0.5 0.5 H10.5 L5.5 5 Z" fill="#666"/></svg>
<div class="t" style="left:1162.00px;top:218.74px;font-size:17.2px;line-height:17.2px;color:#262626;font-weight:700;font-style:normal;-webkit-text-stroke:0">ap</div>
<div class="r" style="left:1181px;top:200px;width:7px;height:700px;background:#fdfdfc;"></div>
<svg class="r" style="left:589px;top:225px" width="22" height="30" viewBox="0 0 22 30"><path d="M2.5 2.5 V23.8 L7.4 18.9 L11.2 26.8 L14.4 25.3 L10.7 17.8 H17.6 Z" fill="#fff" stroke="#111" stroke-width="1.15" stroke-linejoin="miter"/></svg>
<div class="r" style="left:344px;top:1016px;width:837px;height:25.8px;background:#f0f0f0;"></div>
<div class="r" style="left:399px;top:1017px;width:468px;height:24px;background:#cdcdcd;"></div>
<svg class="r" style="left:368px;top:1018px" width="20" height="22" viewBox="0 0 20 22"><path d="M17.8 2.3 H12.1 L3.8 11.4 L12.1 20.1 H17.8 L10.4 11.4 Z" fill="#555"/></svg>
<svg class="r" style="left:1137px;top:1018px" width="20" height="22" viewBox="0 0 20 22"><path d="M2 2.3 H7.7 L16.7 11.4 L7.7 20.1 H2 L10.1 11.4 Z" fill="#555"/></svg>
<div class="t" style="left:1211.30px;top:217.17px;font-size:33px;line-height:33px;color:#217346;font-weight:400;font-style:normal;letter-spacing:-1.392px;-webkit-text-stroke:1.1px #fdfdfc">Query Settings</div>
<svg class="r" style="left:1556px;top:224px" width="22" height="22" viewBox="0 0 22 22"><path d="M2.5 2.5 L19.5 19.5 M19.5 2.5 L2.5 19.5" stroke="#555" stroke-width="1.6"/></svg>
<svg class="r" style="left:1204px;top:289px" width="14" height="13" viewBox="0 0 14 13"><path d="M12 1 V12 H1 Z" fill="#444"/></svg>
<div class="t" style="left:1226.60px;top:287.60px;font-size:17.6px;line-height:17.6px;color:#1e6b3b;font-weight:700;font-style:normal;-webkit-text-stroke:0">PROPERTIES</div>
<div class="t" style="left:1226.40px;top:319.54px;font-size:18.5px;line-height:18.5px;color:#1f1f1f;font-weight:400;font-style:normal;letter-spacing:0.700px;">Name</div>
<div class="r" style="left:1227px;top:344px;width:353px;height:35.5px;background:#ffffff;border:1.5px solid #9a9a9a;box-sizing:border-box"></div>
<div class="t" style="left:1236.00px;top:353.54px;font-size:18.5px;line-height:18.5px;color:#1f1f1f;font-weight:400;font-style:normal;letter-spacing:-0.500px;">Query_Table1</div>
<div class="t" style="left:1227.40px;top:395.94px;font-size:18.5px;line-height:18.5px;color:#2756a0;font-weight:400;font-style:normal;letter-spacing:0.346px;">All Properties</div>
<svg class="r" style="left:1204px;top:453px" width="14" height="13" viewBox="0 0 14 13"><path d="M12 1 V12 H1 Z" fill="#444"/></svg>
<div class="t" style="left:1226.10px;top:451.70px;font-size:17.6px;line-height:17.6px;color:#1e6b3b;font-weight:700;font-style:normal;letter-spacing:0.142px;-webkit-text-stroke:0">APPLIED STEPS</div>
<div class="r" style="left:1227px;top:482px;width:353px;height:528px;background:#fdfdfc;border:1.5px solid #b0b0b0;box-sizing:border-box"></div>
<div class="t" style="left:1260.60px;top:491.64px;font-size:18.5px;line-height:18.5px;color:#1f1f1f;font-weight:400;font-style:normal;letter-spacing:0.060px;">Source</div>
<div class="t" style="left:1260.60px;top:523.14px;font-size:18.5px;line-height:18.5px;color:#1f1f1f;font-weight:400;font-style:normal;letter-spacing:0.409px;">Changed Type</div>
<div class="r" style="left:1228.5px;top:548.3px;width:350px;height:32.3px;background:#d5efe1;"></div>
<svg class="r" style="left:1236px;top:556px" width="19" height="18" viewBox="0 0 19 18"><path d="M2.5 2.5 L16.5 15.5 M16.5 2.5 L2.5 15.5" stroke="#666" stroke-width="1.8"/></svg>
<div class="t" style="left:1260.60px;top:556.04px;font-size:18.5px;line-height:18.5px;color:#1f1f1f;font-weight:400;font-style:normal;letter-spacing:0.293px;">Removed Columns</div>
<div class="r" style="left:0px;top:1043px;width:1619.5px;height:35.5px;background:#217346;border:1px solid #125e30;box-sizing:border-box"></div>
<div class="r" style="left:0px;top:1044px;width:1px;height:33.5px;background:#38a56a;"></div>
<div class="r" style="left:0px;top:1078.5px;width:1620px;height:1.5px;background:#f4f4f4;"></div>
<div class="r" style="left:1619.5px;top:1043px;width:0.5px;height:37px;background:#f4f4f4;"></div>
<div class="t" style="left:7.30px;top:1052.72px;font-size:18.4px;line-height:18.4px;color:#ffffff;font-weight:400;font-style:normal;letter-spacing:-0.994px;">5 COLUMNS, 19 ROWS</div>
<div class="t" style="left:214.70px;top:1052.81px;font-size:18.3px;line-height:18.3px;color:#ffffff;font-weight:400;font-style:normal;letter-spacing:-0.079px;">Column profiling based on top 1000 rows</div>
<div class="t" style="left:1313.00px;top:1052.72px;font-size:18.4px;line-height:18.4px;color:#ffffff;font-weight:400;font-style:normal;letter-spacing:-0.857px;">PREVIEW DOWNLOADED AT 9:40 AM</div>
</body></html>
